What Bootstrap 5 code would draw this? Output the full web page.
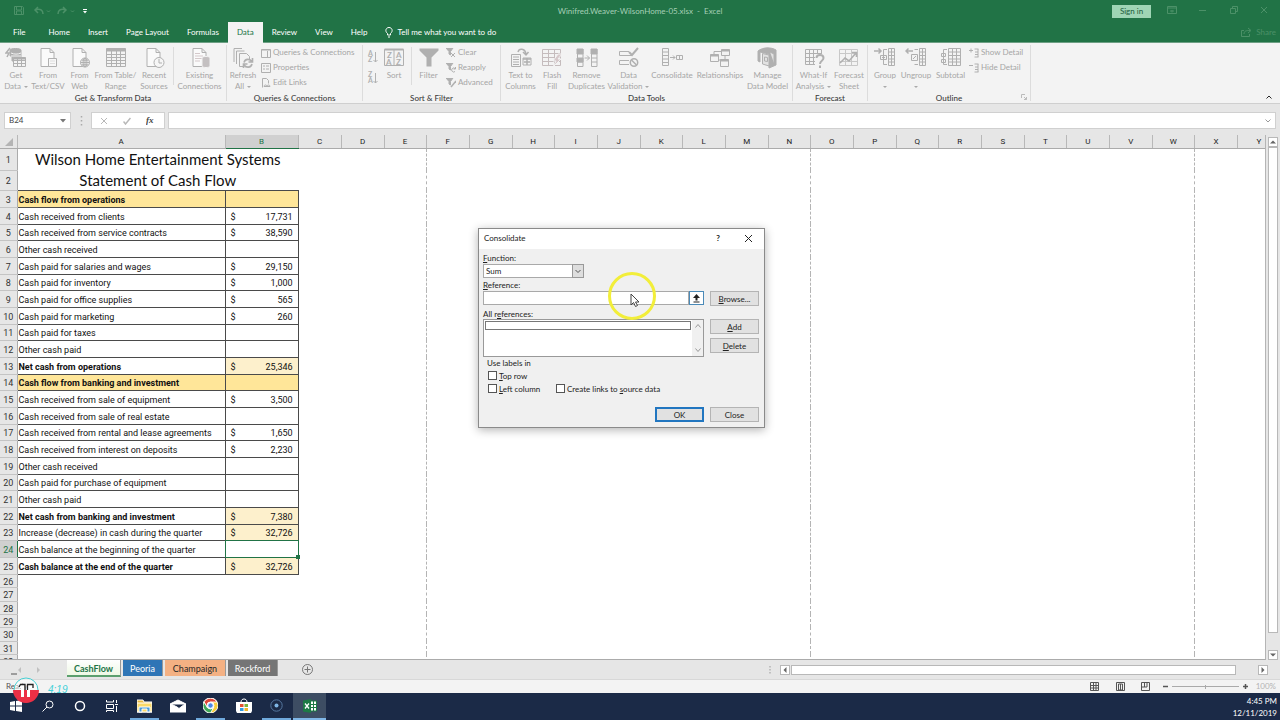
<!DOCTYPE html>
<html lang="en">
<head>
<meta charset="utf-8">
<meta name="viewport" content="width=device-width, initial-scale=1">
<title>Winifred.Weaver-WilsonHome-05.xlsx - Excel</title>
<link href="https://cdn.jsdelivr.net/npm/bootstrap@5.3.0/dist/css/bootstrap.min.css" rel="stylesheet">
<style>
:root { --xl: #217346; --line: #c6c6c6; --dim: #b1b1b1; }
body { font-family: Lato, "Liberation Sans", sans-serif; font-size: 8px; line-height: 11px; color: #262626; background: #e6e6e6; }
button { background: none; border: 0; padding: 0; color: inherit; font: inherit; }
svg { display: block; fill: none; stroke: currentColor; }
svg text { stroke: none; fill: currentColor; font-weight: 700; }

/* title bar and tabs */
.titlebar { height: 22px; background: var(--xl); color: #a6cfb6; }
.quick { color: #4c9168; }
.signin { width: 39px; height: 13px; background: #9fd5b5; color: #205c3b; }
.wintools { color: #4c9168; }
.tabs { height: 21px; background: var(--xl); color: #fff; border-bottom: 1px solid #6d9f84; }
.tabs a { color: inherit; text-decoration: none; padding: 5px 9px; }
.tabs a:first-child { padding: 5px 14px 5px 13px; }
.tabs a.current { background: #f3f3f3; color: var(--xl); height: 21px; }
.tabs a.share { color: #4c9168; }

/* ribbon */
.ribbon { height: 61px; background: #f3f3f3; border-bottom: 1px solid #cfcfcf; }
.rgroup { position: relative; border-right: 1px solid #dcdcdc; margin-top: 2px; padding-top: 2px; height: 56px; }
.tools { display: grid; height: 46px; color: var(--dim); }
.rgroup h2 { font-size: 8px; line-height: 10px; margin: 0; text-align: center; color: #3b3b3b; }
.tool { display: flex; flex-direction: column; align-items: center; justify-content: flex-start; white-space: nowrap; text-align: center; color: #a6a6a6; }
.tool svg { width: 22px; height: 22px; margin-bottom: 1px; color: #b0b0b0; }
.tool > span { display: flex; align-items: center; gap: 3px; height: 11px; }
.tool > .drop::after { content: ""; border: 2px solid transparent; border-top-color: #aaa; border-bottom: 0; }
.vr-thin { border-left: 1px solid #dcdcdc; height: 38px; justify-self: center; }
.stack { display: flex; flex-direction: column; gap: 4px; }
.stack button { display: flex; align-items: center; gap: 2px; white-space: nowrap; color: #a6a6a6; height: 11px; }
.stack svg { width: 10px; height: 10px; color: #b0b0b0; }
.g-get { width: 227px; } .g-get .tools { grid-template-columns: 30px 34px 29px 43px 34px 5px 47px; padding-left: 1px; }
.g-query { width: 136px; } .g-query .tools { grid-template-columns: 30px 1fr; gap: 3px; padding-left: 1px; }
.g-sort { width: 138px; } .g-sort .tools { grid-template-columns: 13px 28px 7px 27px 1fr; padding-left: 4px; }
.g-data { width: 292px; } .g-data .tools { grid-template-columns: 37px 26px 43px 41px 46px 50px 45px; padding-left: 1px; }
.g-fore { width: 75px; } .g-fore .tools { grid-template-columns: 37px 34px; padding-left: 2px; }
.g-out { width: 163px; } .g-out .tools { grid-template-columns: 30px 32px 37px 1fr; padding-left: 2px; }
.corner { right: 3px; bottom: 1px; color: #bbb; }

/* formula bar */
.fbar { padding: 8px 4px 6px; gap: 3px; }
.fbar .boxed { height: 17px; background: #fff; border: 1px solid #d0d0d0; border-radius: 0; }
.fbar input { font-size: 8px; color: #444; outline: 0; min-width: 0; }
.namebox { width: 67px; }
.fbtns { width: 74px; color: #b8b8b8; }

/* worksheet */
.pane { min-height: 0; }
.sheetview { overflow: hidden; min-width: 0; border-right: 1px solid #b5b5b5; border-bottom: 1px solid #ababab; background: #fff; }
.sheet { width: 1281px; table-layout: fixed; border-collapse: collapse; font-family: Roboto, "Liberation Sans", sans-serif; font-size: 9px; line-height: 10px; color: #111; }
.sheet th, .sheet td { padding: 2px 0 0 1px; height: inherit; white-space: nowrap; }
.sheet thead th { height: 13px; background: #e6e6e6; font-weight: 400; font-size: 8px; text-align: center; padding: 1px 0 0; color: #222; border-right: 1px solid #b8b8b8; border-bottom: 1px solid #ababab; }
.sheet thead th.picked { background: #d0d0d0; color: var(--xl); border-bottom-color: var(--xl); }
.sheet tbody th { background: #e6e6e6; font-weight: 400; text-align: center; padding-left: 0; color: #333; border-right: 1px solid #ababab; border-bottom: 1px solid #c4c4c4; }
.sheet tbody th.picked { background: #d0d0d0; color: var(--xl); border-right-color: var(--xl); }
.sheet .sheettitle { font-family: Lato, sans-serif; font-size: 15px; line-height: 17px; text-align: center; padding: 1px 0 0; }
.sheet .entry { border: 1px solid #4a4a4a; }
.sheet .head { background: #ffe699; font-weight: 700; }
.sheet .sum { background: #fdf0cc; }
.sheet .entry.money { padding: 2px 5px 0 5px; }
.sheet .pagebreak { border-right: 1px dashed #b4b4b4; }
.cellcursor { position: relative; }
.cellcursor::before { content: ""; position: absolute; inset: -1px; border: 1px solid var(--xl); }
.cellcursor::after { content: ""; position: absolute; right: -2px; bottom: -2px; width: 4px; height: 4px; background: var(--xl); }
.h13 { height: 13px; } .h14 { height: 14px; } .h16 { height: 16px; } .h17 { height: 17px; } .h20 { height: 20px; } .h22 { height: 22px; }
.vscroll { width: 14px; padding: 2px 2px 0; }
.arrowbox { width: 10px; height: 10px; background: #fff; border: 1px solid #b8b8b8; display: flex; align-items: center; justify-content: center; color: #666; flex: none; }
.thumb { background: #fff; border: 1px solid #b8b8b8; }
.vscroll .thumb { flex: 1; margin-bottom: 17px; }

/* sheet tabs, status bar */
.sheettabs { height: 19px; }
.sheettabs nav { padding-left: 67px; gap: 2px; }
.sheettabs nav a { font-size: 9px; line-height: 17px; height: 16px; color: #262626; text-decoration: none; text-align: center; border-right: 1px solid #999; }
.sheettabs nav .s-cash { width: 54px; height: 17px; font-weight: 700; color: var(--xl); background: linear-gradient(#fff, #eef8e4); border-bottom: 2px solid #5b9f6d; }
.s-cash + a { width: 40px; } .sheettabs nav .blue { background: #2e75b6; color: #fff; }
.sheettabs nav .orange { width: 61px; background: #f4b183; } .sheettabs nav .grey { width: 50px; background: #757575; color: #fff; }
.steps { left: 0; top: 4px; color: #c0c0c0; }
.hscroll { width: 488px; gap: 1px; margin-right: 12px; }
.hscroll .bar { flex: 1; margin-right: 21px; height: 10px; }
.status { height: 14px; background: #f3f3f3; border-top: 1px solid #d8d8d8; padding: 0 4px 0 6px; color: #555; }
.status input { width: 67px; height: 3px; appearance: none; background: linear-gradient(#aaa, #aaa) center/100% 1px no-repeat; }
.status input::-webkit-slider-thumb { appearance: none; width: 1px; height: 4px; background: #aaa; }
.status .zoomed { color: #b4b4b4; }

/* taskbar */
.taskbar { height: 27px; background: #1b2a47; color: #fff; }
.taskbar button { width: 32px; display: flex; align-items: center; justify-content: center; border-bottom: 2px solid transparent; }
.taskbar button:nth-child(n+5) { width: 33px; }
.taskbar .running { border-image: linear-gradient(90deg, transparent 12%, #6fa9dc 12% 88%, transparent 88%) 2; }
.taskbar .front { background: #3d4d63; border-bottom-color: #7fb6e6; }
.taskbar time { padding: 2px 3px 0 0; line-height: 12px; }
.stamp { left: 12px; bottom: 16px; color: #3fd0d8; font: italic 10px/12px "Liberation Sans", sans-serif; }

/* dialog */
.dlg { left: 478px; top: 228px; width: 287px; border: 1px solid #8a8a8a; background: #f0f0f0; color: #222; box-shadow: 0 2px 9px rgba(0, 0, 0, .3); }
.dlg header { height: 20px; background: #fff; padding: 0 11px 1px 5px; }
.dlg form { padding: 3px 5px 5px 4px; display: grid; grid-template-columns: 221px 49px; column-gap: 6px; }
.dlg label, .dlg legend { font-size: 8px; line-height: 12px; margin: 0; float: none; width: auto; }
.dlg .push { height: 15px; width: 49px; background: #e1e1e1; border: 1px solid #b4b4b4; text-align: center; line-height: 12px; }
.dlg .push.ok { border: 2px solid #2176c0; line-height: 10px; }
.dlg .field { border: 1px solid #a9a9a9; background: #fff; border-radius: 0; font-size: 8px; height: 14px; padding: 0 2px; outline: 0; color: #222; }
.dlg .field.refpick { border-color: #4a8ab8; }
.dlg .lead-in { padding-top: 1px; }
.dlg .listname { line-height: 10px; }
.pick { width: 101px; }
.pick select { appearance: none; width: 100%; }
.pick svg { right: 0; top: 0; width: 12px; height: 14px; background: #dedede; border: 1px solid #999; color: #555; pointer-events: none; }
.reflist { border: 1px solid #999; background: #fff; height: 38px; }
.reflist .item { height: 9px; border: 1px solid #777; margin: 1px 1px 0; flex: 1; }
.reflist .rail { width: 11px; background: #f0f0f0; color: #999; }
.dlg fieldset { width: 65px; padding: 0 0 0 5px; }
.dlg legend { margin-left: -1px; }
.dlg input[type=checkbox] { appearance: none; width: 9px; height: 9px; border: 1px solid #555; background: #fff; margin: 0 2px 0 0; }
.dlg .tick { display: flex; align-items: center; height: 13px; white-space: nowrap; }
.pointer { left: 128px; top: 42px; width: 50px; height: 50px; pointer-events: none; }
</style>
</head>
<body class="vh-100 d-flex flex-column overflow-hidden position-relative">

<svg width="0" height="0" class="position-absolute">
  <symbol id="doc" viewBox="0 0 22 22"><path d="M4 1.500h9l4 4v14H4zM13 1.500v4h4" fill="#fafafa"/></symbol>
  <symbol id="i-get" viewBox="0 0 22 22"><path d="M5 1 1 6h3L2 10" stroke-width="1.500"/><path d="M5 3c0-2 11-2 11 0v11H7V9H5z" fill="currentColor"/><path d="M6 6c3 1.500 7 1.500 10 0M6 9h10" stroke="#f3f3f3"/><path d="M8.500 10.500h12v9h-12zM8.500 13.500h12M8.500 16.500h12M12.500 11v8M16.500 11v8" fill="#f3f3f3"/><path d="M8.500 11.500h12" stroke-width="2"/></symbol>
  <symbol id="i-csv" viewBox="0 0 22 22"><use href="#doc"/><path d="M11.500 11.500h8v8h-8z" fill="#f7f7f7"/><path d="M13 14h5M13 16.500h5" stroke="#ddd"/></symbol>
  <symbol id="i-web" viewBox="0 0 22 22"><use href="#doc"/><circle cx="16" cy="15.500" r="4.500" fill="#f3f3f3"/><path d="M11.500 15.500h9M16 11v9M12.500 13.200h7M12.500 17.800h7"/><ellipse cx="16" cy="15.500" rx="2" ry="4.500"/></symbol>
  <symbol id="i-table" viewBox="0 0 22 22"><path d="M1.500 1.500h19v18h-19zM1.500 7.500h19M1.500 10.500h19M1.500 13.500h19M1.500 16.500h19M6.500 4v15M11.500 4v15M15.500 4v15"/><path d="M1.500 3h19" stroke-width="3"/></symbol>
  <symbol id="i-recent" viewBox="0 0 22 22"><use href="#doc"/><circle cx="16" cy="15.500" r="5" fill="#f6f6f6"/><path d="M16 12v4h3"/></symbol>
  <symbol id="i-conn" viewBox="0 0 22 22"><use href="#doc"/><path d="M6 6.500h5M6 9h8M6 11.500h8M6 14h5" stroke="#d4c8ca"/><path d="M13 11c0-2 8-2 8 0v8c0 2-8 2-8 0z" fill="#c4c0c1" stroke="#f3f3f3"/></symbol>
  <symbol id="i-refresh" viewBox="0 0 22 22"><path d="M2 15V1.500h8M4.500 17V4h8M7.500 19.500v-13h7l3 3V12M7.500 19.500h4"/><path d="M12 15.500c1-4 6-4 8-1M20.500 11v4h-4M20 17c-1 4-6 4-8 1M11.500 21v-4h4" stroke-width="1.600"/></symbol>
  <symbol id="i-filter" viewBox="0 0 22 22"><path d="M1.500 1.500h19v2l-7 7v9h-5v-9l-7-7z" fill="currentColor" stroke="none"/></symbol>
  <symbol id="i-text" viewBox="0 0 22 22"><path d="M8 5c1-4 7-4 8 2M13 5l3 3 2.500-3" stroke-width="1.500"/><path d="M1.500 7.500h9v12h-9zM3 10h6M3 12.500h6M3 15h6M3 17.500h6"/><path d="M13 11h8v7h-8z"/><path d="M13 12h8M17 11v7M14 15h6" stroke-width="1.500"/></symbol>
  <symbol id="i-flash" viewBox="0 0 22 22"><path d="M1.500 2.500h18v16h-18zM1.500 6.500h18M1.500 10.500h18M1.500 14.500h18M7.500 2.500v16M13.500 2.500v16" stroke="#c5bcbd"/><path d="m17 7-5 7h3l-3 6 8-8h-3l4-5z" fill="#d6c8ca" stroke="#f3f3f3"/></symbol>
  <symbol id="i-remove" viewBox="0 0 22 22"><path d="M1 2h6v5H1zM1 11h6v4H1zM15 2h6v5h-6z" fill="currentColor"/><path d="M1.500 2v17.500h5.500V2M15.500 2v17.500H21V2M15.500 11H21M15.500 15H21M1 15h6M8.500 11h5M11 8.500l2.500 2.500-2.500 2.500"/></symbol>
  <symbol id="i-valid" viewBox="0 0 22 22"><path d="M11 4.500H1.500v4H14M1.500 13.500H11M1.500 17.500H11M1.500 13.500v4"/><path d="m11 5 3 3 6-7" stroke-width="2"/><circle cx="16" cy="15.500" r="3.700" stroke-width="1.500"/><path d="m13.500 13 5 5" stroke-width="1.500"/></symbol>
  <symbol id="i-cons" viewBox="0 0 22 22"><path d="M1.500 1.500h6v17h-6zM1.500 5h6M1.500 8.500h6M1.500 12h6M1.500 15.500h6M9 10.500h5M12 8.500l2 2-2 2M15.500 8.500h6v4h-6zM18.500 8.500v4"/></symbol>
  <symbol id="i-rel" viewBox="0 0 22 22"><path d="M1.500 7.500h8v7h-8zM12.500 2.500h8v6h-8zM11.500 12.500h8v7h-8zM5 7V4.500h7M9.500 13h3M16 9v3"/><path d="M1.500 8.500h8M12.500 3.500h8M11.500 13.500h8" stroke-width="2"/></symbol>
  <symbol id="i-model" viewBox="0 0 22 22"><path d="M1 4c5-4 13-4 18-1v15l-7 3V7L3 5v10l-2-1z" fill="currentColor"/><path d="M5.500 6.500 12 8v11l-6.500-2zM13 5l4 2v9M7.500 10l3 .5v4l-3-.5z" fill="#e2e2e2"/></symbol>
  <symbol id="i-what" viewBox="0 0 22 22"><path d="M2.500 2.500h16v15h-16zM2.500 6.500h16M2.500 10.500h16M2.500 14.500h16M6.500 2.500v15M10.500 2.500v15M14.500 2.500v15"/><path d="M12 7h10v14H12z" fill="#f3f3f3" stroke="none"/><path d="M13.500 11c0-4 7-4 7 0 0 3-3.500 2.500-3.500 6M17 18.500V21" stroke-width="2"/></symbol>
  <symbol id="i-fore" viewBox="0 0 22 22"><path d="M1.500 2.500h18v16h-18zM1.500 6.500h18M1.500 14.500h18M7.500 2.500v16M13.500 2.500v16" stroke="#c8c8c8"/><path d="m2 16 5-5 4 3 7-8M14 5.500h4.500V10" stroke-width="1.600"/></symbol>
  <symbol id="i-group" viewBox="0 0 22 22"><path d="M0 4h7M4.500 1.500 7 4 4.500 6.500" stroke-width="1.500"/><path d="M13 2.500H9.500v15H13M6.500 8.500h6v4h-6zM9.500 9v3M8 10.500h3M14.500 1.500h6v17h-6zM14.500 5h6M14.500 8.500h6M14.500 12h6M14.500 15h6M17.500 1.500v17"/></symbol>
  <symbol id="i-ungroup" viewBox="0 0 22 22"><path d="M1 4h7M3.500 1.500 1 4l2.500 2.500" stroke-width="1.500"/><path d="M13 2.500H9.500M9.500 17.500H13M6.500 7.500h6v6h-6zM8 12l3-3M14.500 1.500h6v17h-6zM14.500 5h6M14.500 8.500h6M14.500 12h6M14.500 15h6M17.500 1.500v17"/></symbol>
  <symbol id="i-sub" viewBox="0 0 22 22"><path d="M7 2.500H3.500v15H7M1.500 6.500h4v3h-4zM1.500 12.500h4v3h-4zM8.500 1.500h12v17h-12zM8.500 5h12M8.500 8.500h12M8.500 12h12M8.500 15h12M12.500 1.500v17M16.500 1.500v17"/></symbol>
  <symbol id="s-pane" viewBox="0 0 10 10"><path d="M.5 1.500h9v8h-9zM.5 2h9M6.500 3v6"/></symbol>
  <symbol id="s-prop" viewBox="0 0 10 10"><path d="M.5.500h9v9h-9zM2 3h2M5 3h3M2 6h2M5 6h3"/></symbol>
  <symbol id="s-link" viewBox="0 0 10 10"><path d="M1.500 9.500v-9h4l2 2v3M3 8.500c0-2 3-2 3 0M6 8.500c0-2 3-2 3 0M3 8.500h6"/></symbol>
  <symbol id="s-clear" viewBox="0 0 10 10"><path d="M0 0h7L4.500 3.500V7L3 6V3.500z" fill="currentColor"/><path d="m5 5 4 4M9 5 5 9"/></symbol>
  <symbol id="s-again" viewBox="0 0 10 10"><path d="M0 0h7L4.500 3.500V7L3 6V3.500z" fill="currentColor"/><path d="M9 5.500a2 2 0 1 0 0 3M9.500 4v2h-2"/></symbol>
  <symbol id="s-adv" viewBox="0 0 10 10"><path d="M0 0h7L4.500 3.500V7L3 6V3.500z" fill="currentColor"/><path d="m5 9 5-6" stroke-width="1.500"/></symbol>
  <symbol id="s-show" viewBox="0 0 10 10"><path d="M0 2.500h4M2 .5v4M5.500 1h4M5.500 9h4M9 1v8M6 4h3M6 6.500h3"/></symbol>
  <symbol id="s-hide" viewBox="0 0 10 10"><path d="M0 2.500h4M5.500 1h4M5.500 9h4M9 1v8M6 4h3M6 6.500h3"/></symbol>
</svg>

<header class="titlebar d-flex align-items-center flex-shrink-0">
  <div class="quick d-flex align-items-center flex-fill w-25" role="toolbar" aria-label="Quick access">
    <svg width="92" height="22" viewBox="0 0 92 22"><path d="M14.500 6.500h8l1 1v7h-9zM16.500 7v3h5V7M16.500 14v-3h5v3"/><path d="M38 7l-3 3 3 3M35 10c5-2 8 0 8 4" stroke-width="1.500"/><path d="m47 10.500 1.500 1.500 1.500-1.500M71 10.500l1.500 1.500 1.500-1.500"/><path d="m63 7 3 3-3 3M66 10c-5-2-8 0-8 4" stroke-width="1.500"/><path d="M83 9.500h4" stroke="#fff"/><path d="M83 11h4l-2 2.500z" fill="#fff" stroke="none"/></svg>
  </div>
  <div class="text-nowrap">Winifred.Weaver-WilsonHome-05.xlsx&nbsp; -&nbsp; Excel</div>
  <div class="d-flex align-items-center justify-content-end flex-fill w-25">
    <button class="signin">Sign in</button>
    <svg class="wintools" width="129" height="22" viewBox="0 0 129 22"><path d="M16.500 6.500h9v7h-9zM17 8h8M21 12.500V10M19 11h4M48 10.500h7"/><path d="M79.500 8.500h5v5h-5zM81.500 8V6.500h5v5H85M110 7l6 6M116 7l-6 6"/></svg>
  </div>
</header>

<nav class="tabs d-flex align-items-start flex-shrink-0 pe-1" aria-label="Ribbon tabs">
  <a href="#">File</a><a href="#">Home</a><a href="#">Insert</a><a href="#">Page Layout</a><a href="#">Formulas</a><a href="#" class="current">Data</a><a href="#">Review</a><a href="#">View</a><a href="#">Help</a>
  <a href="#" class="d-flex gap-1"><svg width="8" height="11" viewBox="0 0 8 11"><path d="M2.500 8V6.500C-.5 4 1 .5 4 .5s4.500 3.500 1.500 6V8zM3 10h2"/></svg>Tell me what you want to do</a>
  <a href="#" class="share ms-auto d-flex gap-1 pe-0"><svg width="11" height="11" viewBox="0 0 11 11"><path d="M3 3.500H.5v6h8V7M3 7c0-3 2-3.500 6-3.500M7 1l3 2.500L7 6"/></svg>Share</a>
</nav>

<section class="ribbon d-flex flex-shrink-0 position-relative" aria-label="Data">
  <div class="rgroup g-get"><div class="tools">
    <button class="tool"><svg><use href="#i-get"/></svg><span>Get</span><span class="drop">Data</span></button>
    <button class="tool"><svg><use href="#i-csv"/></svg><span>From</span><span>Text/CSV</span></button>
    <button class="tool"><svg><use href="#i-web"/></svg><span>From</span><span>Web</span></button>
    <button class="tool"><svg><use href="#i-table"/></svg><span>From Table/</span><span>Range</span></button>
    <button class="tool"><svg><use href="#i-recent"/></svg><span>Recent</span><span>Sources</span></button>
    <span class="vr-thin"></span>
    <button class="tool"><svg><use href="#i-conn"/></svg><span>Existing</span><span>Connections</span></button>
  </div><h2>Get &amp; Transform Data</h2></div>
  <div class="rgroup g-query"><div class="tools">
    <button class="tool"><svg><use href="#i-refresh"/></svg><span>Refresh</span><span class="drop">All</span></button>
    <div class="stack"><button><svg><use href="#s-pane"/></svg>Queries &amp; Connections</button><button><svg><use href="#s-prop"/></svg>Properties</button><button><svg><use href="#s-link"/></svg>Edit Links</button></div>
  </div><h2>Queries &amp; Connections</h2></div>
  <div class="rgroup g-sort"><div class="tools">
    <svg width="11" height="44" viewBox="0 0 11 44" role="img" aria-label="Sort A to Z, sort Z to A"><text x="1" y="9" font-size="7">A</text><text x="1" y="15" font-size="7">Z</text><path d="M8.500 5v10M6.500 13l2 2 2-2M8.500 26v10M6.500 34l2 2 2-2"/><text x="1" y="30" font-size="7">Z</text><text x="1" y="36" font-size="7">A</text></svg>
    <button class="tool"><svg viewBox="0 0 22 22"><path d="M1.500 2.500h19v16h-19zM11 3v15"/><path d="M1.500 2.500h19" stroke-width="2"/><text x="4" y="11" font-size="8">Z</text><text x="3" y="18" font-size="8">A</text><text x="13" y="11" font-size="8">A</text><text x="13" y="18" font-size="8">Z</text></svg><span>Sort</span></button>
    <span class="vr-thin"></span>
    <button class="tool"><svg><use href="#i-filter"/></svg><span>Filter</span></button>
    <div class="stack ps-1"><button><svg><use href="#s-clear"/></svg>Clear</button><button><svg><use href="#s-again"/></svg>Reapply</button><button><svg><use href="#s-adv"/></svg>Advanced</button></div>
  </div><h2>Sort &amp; Filter</h2></div>
  <div class="rgroup g-data"><div class="tools">
    <button class="tool"><svg><use href="#i-text"/></svg><span>Text to</span><span>Columns</span></button>
    <button class="tool"><svg><use href="#i-flash"/></svg><span>Flash</span><span>Fill</span></button>
    <button class="tool"><svg><use href="#i-remove"/></svg><span>Remove</span><span>Duplicates</span></button>
    <button class="tool"><svg><use href="#i-valid"/></svg><span>Data</span><span class="drop">Validation</span></button>
    <button class="tool"><svg><use href="#i-cons"/></svg><span>Consolidate</span></button>
    <button class="tool"><svg><use href="#i-rel"/></svg><span>Relationships</span></button>
    <button class="tool"><svg><use href="#i-model"/></svg><span>Manage</span><span>Data Model</span></button>
  </div><h2>Data Tools</h2></div>
  <div class="rgroup g-fore"><div class="tools">
    <button class="tool"><svg><use href="#i-what"/></svg><span>What-If</span><span class="drop">Analysis</span></button>
    <button class="tool"><svg><use href="#i-fore"/></svg><span>Forecast</span><span>Sheet</span></button>
  </div><h2>Forecast</h2></div>
  <div class="rgroup g-out"><div class="tools">
    <button class="tool"><svg><use href="#i-group"/></svg><span>Group</span><span class="drop"></span></button>
    <button class="tool"><svg><use href="#i-ungroup"/></svg><span>Ungroup</span><span class="drop"></span></button>
    <button class="tool"><svg><use href="#i-sub"/></svg><span>Subtotal</span></button>
    <div class="stack"><button><svg><use href="#s-show"/></svg>Show Detail</button><button><svg><use href="#s-hide"/></svg>Hide Detail</button></div>
  </div><h2>Outline</h2>
    <svg class="corner position-absolute" width="6" height="6" viewBox="0 0 6 6"><path d="M.5 4V.500H4M3 3l2.500 2.500M5.500 3v2.500H3"/></svg></div>
  <button class="position-absolute end-0 bottom-0 me-2 mb-1" aria-label="Collapse ribbon"><svg width="6" height="4" viewBox="0 0 6 4"><path d="m.5 3.500 2.500-2.500 2.500 2.500"/></svg></button>
</section>

<div class="fbar d-flex flex-shrink-0">
  <div class="boxed namebox d-flex align-items-center pe-1"><input class="border-0 bg-transparent flex-fill w-50 ps-1" aria-label="Name box" value="B24"><svg class="flex-shrink-0" width="6" height="4" viewBox="0 0 6 4"><path d="M0 0h6L3 3.500z" fill="#777" stroke="none"/></svg></div>
  <svg width="14" height="17" viewBox="0 0 14 17" color="#aaa"><path d="M7.500 4v10" stroke-dasharray="1.500 2.500" stroke-width="1.500"/></svg>
  <div class="boxed fbtns d-flex justify-content-around align-items-center">
    <button aria-label="Cancel"><svg width="8" height="8" viewBox="0 0 8 8"><path d="m1 1 6 6M7 1 1 7"/></svg></button>
    <button aria-label="Enter"><svg width="8" height="8" viewBox="0 0 8 8"><path d="m.5 4.500 2 2.500 5-6" stroke-width="1.500"/></svg></button>
    <button aria-label="Insert function"><svg width="10" height="11" viewBox="0 0 10 11" color="#444"><text x="0" y="8" font-size="9" font-family="Liberation Serif" font-style="italic">fx</text></svg></button>
  </div>
  <div class="boxed d-flex flex-fill align-items-center pe-1"><input class="border-0 bg-transparent flex-fill" aria-label="Formula bar"><svg width="6" height="4" viewBox="0 0 6 4" color="#999"><path d="m.5.500 2.500 2.500L5.500.500"/></svg></div>
</div>

<main class="pane d-flex flex-fill">
  <div class="sheetview flex-fill">
    <table class="sheet"><colgroup id="cols"></colgroup><thead><tr id="letters"></tr></thead><tbody id="rows"></tbody></table>
  </div>
  <div class="vscroll d-flex flex-column">
    <div class="arrowbox"><svg width="6" height="4" viewBox="0 0 6 4"><path d="M0 3.500h6L3 .5z" fill="#666" stroke="none"/></svg></div>
    <div class="thumb"></div>
    <div class="arrowbox"><svg width="6" height="4" viewBox="0 0 6 4"><path d="M0 .5h6L3 3.500z" fill="#666" stroke="none"/></svg></div>
  </div>
</main>

<div class="sheettabs d-flex flex-shrink-0 position-relative">
  <svg class="steps position-absolute" width="46" height="16" viewBox="0 0 46 16"><path d="m21 3-3 3 3 3zM37 3l3 3-3 3z" fill="#c0c0c0" stroke="none"/><path d="M11 10h6" stroke="#555"/></svg>
  <nav class="d-flex" aria-label="Sheets"><a href="#" class="s-cash">CashFlow</a><a href="#" class="blue">Peoria</a><a href="#" class="orange">Champaign</a><a href="#" class="grey">Rockford</a></nav>
  <button class="ms-4" aria-label="New sheet"><svg width="11" height="11" viewBox="0 0 11 11" color="#777"><circle cx="5.500" cy="5.500" r="5"/><path d="M5.500 2.500v6M2.500 5.500h6"/></svg></button>
  <svg class="ms-auto me-2 align-self-center" width="4" height="8" viewBox="0 0 4 8" color="#999"><path d="M2 0v8" stroke-dasharray="1.500 1.500"/></svg>
  <div class="hscroll d-flex align-items-center">
    <div class="arrowbox"><svg width="4" height="6" viewBox="0 0 4 6"><path d="M3.500 0v6L.5 3z" fill="#666" stroke="none"/></svg></div>
    <div class="thumb bar"></div>
    <div class="arrowbox"><svg width="4" height="6" viewBox="0 0 4 6"><path d="M.5 0v6l3-3z" fill="#666" stroke="none"/></svg></div>
  </div>
</div>

<footer class="status d-flex align-items-center flex-shrink-0">
  <span class="me-auto">Ready</span>
  <svg width="61" height="9" viewBox="0 0 61 9"><path d="M.5.500h8v8h-8zM3.500 0v9M6 0v9M0 3.500h9M0 6h9M26.500.500h8v8h-8zM28.500 2h4v6h-4zM30.500 2v6M51.500.500h8v8h-8zM54.500 0v5M57 0v5M52 5h5"/></svg>
  <span class="ms-2 me-1 ps-1"><svg width="5" height="5" viewBox="0 0 5 5"><path d="M0 2.500h5" stroke-width="1.500"/></svg></span>
  <input type="range" aria-label="Zoom" value="50">
  <span class="mx-1"><svg width="5" height="5" viewBox="0 0 5 5"><path d="M0 2.500h5M2.500 0v5" stroke-width="1.500"/></svg></span>
  <span class="zoomed ms-1">100%</span>
</footer>

<footer class="taskbar d-flex flex-shrink-0">
  <button aria-label="Start"><svg width="12" height="12" viewBox="0 0 12 12"><path d="M0 2 5 1v4.500H0zM6 1l6-1v5.500H6zM0 6.500h5V11l-5-1zM6 6.500h6V12l-6-1z" fill="#fff" stroke="none"/></svg></button>
  <button aria-label="Search"><svg width="12" height="12" viewBox="0 0 12 12"><circle cx="7.500" cy="4.500" r="3.500"/><path d="m5 7-4.500 4.500"/></svg></button>
  <button aria-label="Cortana"><svg width="12" height="12" viewBox="0 0 12 12"><circle cx="6" cy="6" r="4.500" stroke-width="1.500"/></svg></button>
  <button aria-label="Task view"><svg width="12" height="12" viewBox="0 0 12 12"><path d="M.5 0v2h7V0M.5 4.500h7v4h-7zM.5 12v-1.500h7V12M10.500 0v3M10.500 6v6M9 4.500h3"/></svg></button>
  <button class="running" aria-label="File Explorer"><svg width="15" height="14" viewBox="0 0 15 14" stroke="none"><path d="M0 1h6l1 2h8v10H0z" fill="#e9b83d"/><path d="M0 4h15v9H0z" fill="#fbd968"/><path d="M2 13V8h11v5h-3v-3H5v3z" fill="#4b9bd8"/></svg></button>
  <button aria-label="Mail"><svg width="16" height="14" viewBox="0 0 16 14" stroke="none"><path d="M0 5 8 1l8 4v8H0z" fill="#fff"/><path d="M1 5h14L9 9.500 7 8z" fill="#1b2a47"/></svg></button>
  <button class="running" aria-label="Chrome"><svg width="15" height="15" viewBox="0 0 16 16" stroke="none"><circle cx="8" cy="8" r="8" fill="#f8ce3a"/><path d="M8 8 5 10 1.100 4A8 8 0 0 0 8 16l3.500-6z" fill="#3fa757"/><path d="M1.100 4A8 8 0 0 1 14.900 4.300H8L4.500 10z" fill="#e0473a"/><circle cx="8" cy="8" r="3.700" fill="#fff"/><circle cx="8" cy="8" r="2.900" fill="#4a88e8"/></svg></button>
  <button aria-label="Store"><svg width="16" height="16" viewBox="0 0 16 16"><path d="M5 4c0-4 6-4 6 0" stroke="#fff"/><path d="M0 4h16v9l-1 2H1l-1-2z" fill="#fff" stroke="none"/><path d="M4 6h3.500v3H4z" fill="#e45030" stroke="none"/><path d="M8.500 6H12v3H8.500z" fill="#7ab43c" stroke="none"/><path d="M4 10h3.500v3H4z" fill="#2f9be0" stroke="none"/><path d="M8.500 10H12v3H8.500z" fill="#f2b52b" stroke="none"/></svg></button>
  <button class="running" aria-label="Recorder"><svg width="13" height="13" viewBox="0 0 13 13"><circle cx="6.500" cy="6.500" r="5.700" stroke="#55779f"/><circle cx="6.500" cy="6.500" r="2" fill="#7fb6e6" stroke="none"/></svg></button>
  <button class="front" aria-label="Excel"><svg width="14" height="14" viewBox="0 0 14 14"><path d="M7 2h6.500v10H7z" fill="#fff" stroke="#1d7a45"/><path d="M7 5.500h6M7 8.500h6M10.500 2v10" stroke="#1d7a45"/><path d="M0 1.500 8 0v14l-8-1.500z" fill="#1d7a45" stroke="none"/><path d="m2 4.500 4 5M6 4.500l-4 5" stroke="#fff" stroke-width="1.300"/></svg></button>
  <time class="ms-auto text-end">4:45 PM<br>12/11/2019</time>
</footer>

<div class="stamp position-absolute d-flex align-items-center gap-2">
  <svg width="28" height="28" viewBox="0 0 28 28"><circle cx="14" cy="14" r="12" stroke="#45cfd3" fill="#fff" fill-opacity=".5"/><path d="M1 14h26a13 13 0 0 1-26 0z" fill="#ec2f45" stroke="none"/><path d="M7 9h5v12H9v-9H7zM15 9h6v3h-3v9h-3z" fill="#fff" stroke="none"/><path d="M7 11l1.500-2.500H13V14M15.500 14V8.500H21V12" stroke="#222" stroke-width="1.300"/></svg>
  <span>4:19</span>
</div>

<div class="dlg position-absolute" role="dialog" aria-labelledby="dlgname">
  <header class="d-flex align-items-center">
    <span id="dlgname" class="me-auto">Consolidate</span>
    <button class="fw-bold me-4" aria-label="Help">?</button>
    <button aria-label="Close dialog"><svg width="9" height="9" viewBox="0 0 9 9"><path d="m1 1 7 7M8 1 1 8"/></svg></button>
  </header>
  <form onsubmit="return false">
    <div>
      <label for="fn" class="d-block"><u>F</u>unction:</label>
      <div class="pick position-relative"><select id="fn" class="field d-block"><option>Sum</option></select><svg class="position-absolute" viewBox="0 0 10 12"><path d="m2.500 5 2.500 2.500L7.500 5"/></svg></div>
      <label for="ref" class="lead-in d-block"><u>R</u>eference:</label>
    </div><div></div>
    <div class="d-flex mb-1"><input id="ref" class="field flex-fill"><button class="field refpick flex-shrink-0" aria-label="Collapse dialog"><svg width="9" height="9" viewBox="0 0 9 9"><path d="M4.500 0 8 4H5.500v2.500h-2V4H1zM1.500 7.500h6v1h-6z" fill="#222" stroke="none"/></svg></button></div>
    <button class="push"><u>B</u>rowse...</button>
    <span id="all" class="listname">All r<u>e</u>ferences:</span><div></div>
    <div class="reflist d-flex" role="listbox" aria-labelledby="all"><div class="item" role="option"></div><div class="rail d-flex flex-column justify-content-between align-items-center py-1"><svg width="6" height="4" viewBox="0 0 6 4"><path d="m.5 3.500 2.500-3 2.500 3"/></svg><svg width="6" height="4" viewBox="0 0 6 4"><path d="m.5.500 2.500 3 2.500-3"/></svg></div></div>
    <div class="d-flex flex-column gap-1"><button class="push"><u>A</u>dd</button><button class="push"><u>D</u>elete</button></div>
    <div class="d-flex align-items-end gap-2">
      <fieldset><legend>Use labels in</legend><label class="tick"><input type="checkbox"><span><u>T</u>op row</span></label><label class="tick"><input type="checkbox"><span><u>L</u>eft column</span></label></fieldset>
      <label class="tick"><input type="checkbox"><span>Create links to <u>s</u>ource data</span></label>
    </div><div></div>
    <div class="d-flex justify-content-end pt-2 mt-1"><button class="push ok">OK</button></div>
    <div class="pt-2 mt-1"><button class="push">Close</button></div>
  </form>
  <svg class="pointer position-absolute" viewBox="0 0 50 50"><circle cx="25" cy="25" r="22.500" stroke="#f2ee3a" stroke-width="3"/><path d="M24 23v11l2.500-2.500 2 4 2-1-2-3.500H32z" fill="#fff" stroke="#444"/></svg>
</div>

<script>
const cols = document.getElementById('cols'), letters = document.getElementById('letters'), body = document.getElementById('rows');
const widths = [17, 208, 73];
for (let i = 0; i < 23; i++) widths.push(i % 3 === 2 ? 42 : 43);
cols.innerHTML = widths.map(w => `<col style="width:${w}px">`).join('');
letters.innerHTML = '<th><svg width="8" height="8" viewBox="0 0 8 8" class="ms-auto me-1"><path d="M8 0v8H0z" fill="#b4b4b4" stroke="none"/></svg></th>' +
  [...'ABCDEFGHIJKLMNOPQRSTUVWXY'].map(c => `<th class="${c === 'B' ? 'picked' : ''}">${c}</th>`).join('');

/* kind: h = section heading, s = subtotal in bold, t = shaded total, p = plain entry */
const entries = [
  ['h', 'Cash flow from operations'], ['p', 'Cash received from clients', '17,731'],
  ['p', 'Cash received from service contracts', '38,590'], ['p', 'Other cash received'],
  ['p', 'Cash paid for salaries and wages', '29,150'], ['p', 'Cash paid for inventory', '1,000'],
  ['p', 'Cash paid for office supplies', '565'], ['p', 'Cash paid for marketing', '260'],
  ['p', 'Cash paid for taxes'], ['p', 'Other cash paid'], ['s', 'Net cash from operations', '25,346'],
  ['h', 'Cash flow from banking and investment'], ['p', 'Cash received from sale of equipment', '3,500'],
  ['p', 'Cash received from sale of real estate'], ['p', 'Cash received from rental and lease agreements', '1,650'],
  ['p', 'Cash received from interest on deposits', '2,230'], ['p', 'Other cash received'],
  ['p', 'Cash paid for purchase of equipment'], ['p', 'Other cash paid'],
  ['s', 'Net cash from banking and investment', '7,380'], ['t', 'Increase (decrease) in cash during the quarter', '32,726'],
  ['p', 'Cash balance at the beginning of the quarter'], ['s', 'Cash balance at the end of the quarter', '32,726']
];
const pages = [3, 9, 9, 2].map((n, i) => `<td rowspan="32" colspan="${n}" class="${i < 3 ? 'pagebreak' : ''}"></td>`).join('');
let html = `<tr class="h22"><th>1</th><td colspan="2" class="sheettitle">Wilson Home Entertainment Systems</td>${pages}</tr>
  <tr class="h20"><th>2</th><td colspan="2" class="sheettitle">Statement of Cash Flow</td></tr>`;
entries.forEach(([kind, name, amount], i) => {
  const row = i + 3, here = row === 24;
  const value = amount ? `<div class="d-flex justify-content-between fw-normal"><span>$</span><span>${amount}</span></div>` : '';
  html += `<tr class="${i % 3 === 2 ? 'h16' : 'h17'}"><th class="${here ? 'picked' : ''}">${row}</th>
    <td class="entry ${kind === 'h' ? 'head' : ''} ${kind === 's' ? 'fw-bold' : ''}">${name}</td>
    <td class="entry money ${kind === 'h' ? 'head' : ''} ${kind === 's' || kind === 't' ? 'sum' : ''} ${here ? 'cellcursor' : ''}">${value}</td></tr>`;
});
for (let row = 26; row <= 32; row++) html += `<tr class="${row % 3 === 0 ? 'h14' : 'h13'}"><th>${row}</th><td></td><td></td></tr>`;
body.innerHTML = html;
</script>
<script src="https://cdn.jsdelivr.net/npm/bootstrap@5.3.0/dist/js/bootstrap.bundle.min.js"></script>
</body>
</html>
